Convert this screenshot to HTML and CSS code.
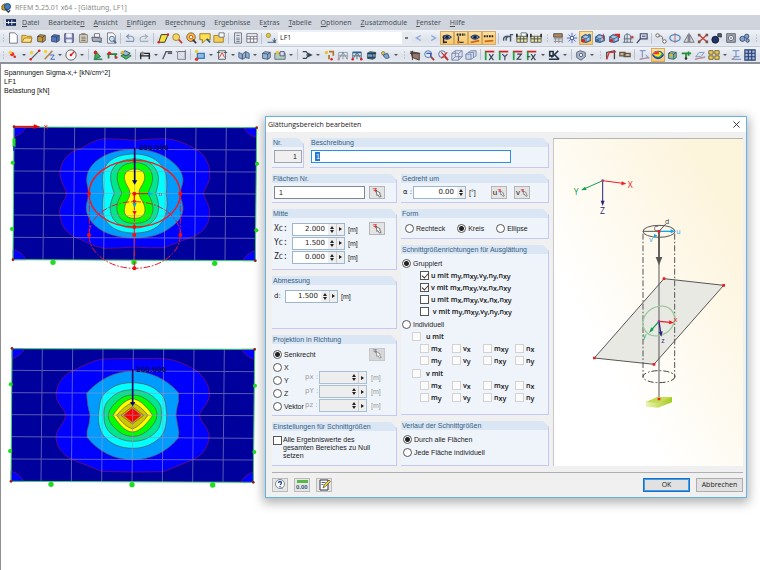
FILE: index.html
```html
<!DOCTYPE html>
<html lang="de">
<head>
<meta charset="utf-8">
<title>RFEM 5.25.01 x64 - [Glättung, LF1]</title>
<link rel="stylesheet" href="styles.css">
</head>
<body>
<header class="titlebar">
  <svg class="app-icon" viewBox="0 0 12 12"><path d="M1 4l3-2 3 2v4L4 9 1 8z" fill="#e0a526" stroke="#6b4d12"/><circle cx="7" cy="5" r="3.4" fill="#3c7cba" stroke="#1d3f6c"/><path d="M5 8l3 3 2-2" fill="none" stroke="#243d5c" stroke-width="1.5"/></svg>
  <span>RFEM 5.25.01 x64 - [Glättung, LF1]</span>
</header>
<nav class="menubar">
  <i class="grip"></i>
  <svg class="menu-icon" viewBox="0 0 12 10"><rect y="1" width="12" height="8" fill="#17295c"/><path d="M0 5h12M3 3v4M7 2v6M9.500 4v2" stroke="#fff"/></svg>
  <a href="#"><u>D</u>atei</a><a href="#">Bearbeite<u>n</u></a><a href="#"><u>A</u>nsicht</a><a href="#"><u>E</u>infügen</a><a href="#">Be<u>r</u>echnung</a><a href="#">Er<u>g</u>ebnisse</a><a href="#">E<u>x</u>tras</a><a href="#"><u>T</u>abelle</a><a href="#"><u>O</u>ptionen</a><a href="#"><u>Z</u>usatzmodule</a><a href="#"><u>F</u>enster</a><a href="#"><u>H</u>ilfe</a>
</nav>
<div class="toolbar" id="bar-main"></div>
<div class="toolbar last" id="bar-model"></div>

<main class="workspace">
  <p class="legend">Spannungen Sigma-x,+ [kN/cm^2]<br>LF1<br>Belastung [kN]</p>
  <svg class="plot" viewBox="0 24 795 480">
    <path d="M42 51L770 53 766 452 39 449z" fill="#00009c"/>
    <g fill="#0000ff" stroke="#8a1060" stroke-width="2">
      <path d="M42 51H79Q68 72 42 81zM770 53H732Q744 76 769 82zM39 449H78Q66 426 39 418zM766 452H728Q740 430 766 421z"/>
      <path d="M312 86Q360 86 403 91Q450 86 492 86C530 87 560 103 587 117C617 134 632 168 629 200C627 225 611 235 611 251C613 270 630 280 629 315C626 352 600 374 570 383L492 413Q450 415 403 411Q360 415 312 415C275 408 255 392 222 381C190 362 180 335 179 305C181 277 199 269 199 251C197 230 178 218 180 182C184 151 208 124 240 117C266 102 285 89 312 86z"/>
    </g>
    <g stroke="#704a48" stroke-width="2">
      <path fill="#009bff" d="M403 118C450 118 490 132 515 154C545 177 554 203 547 224Q536 251 547 279C554 306 544 330 515 350C485 374 450 384 403 384C353 384 314 371 289 350C260 326 253 296 262 272Q269 251 262 228C254 194 268 166 298 146C325 128 360 118 403 118z"/>
      <path fill="#00ffff" d="M403 132C437 132 464 144 479 160C500 182 503 210 499 250C504 290 502 320 478 345C457 363 433 369 403 369C367 369 339 359 322 338C303 313 306 278 311 250C306 208 304 179 326 156C344 139 373 132 403 132z"/>
      <path fill="#00e68c" d="M404 147C438 147 461 162 470 183C480 205 474 224 467 250C479 282 480 308 463 329C447 348 426 354 404 354C373 354 352 345 338 324C324 299 333 272 343 250C330 216 327 192 341 172C355 154 378 147 404 147z"/>
      <path fill="#00ff00" d="M404 158C431 158 448 169 455 189C463 215 450 231 444 250C456 274 464 292 455 315C447 335 425 340 404 340C375 340 360 330 353 309C345 287 357 267 366 250C356 229 346 204 355 184C363 166 382 158 404 158z"/>
      <path fill="#ffff00" d="M404 177C425 177 436 188 434 205C431 225 416 234 417 250C418 266 435 278 435 299C435 318 421 325 404 325C383 325 372 317 373 298C374 278 389 267 390 250C390 234 374 222 373 204C373 187 385 177 404 177z"/>
    </g>
    <path d="M133 52L129 450M224 52L220 450M315 52L311 450M406 52L402 451M497 52L493 451M588 53L584 451M679 53L675 452M42 116L769 120M41 183L769 186M41 249L768 252M40 315L768 320M40 382L767 385" stroke="#9696c4" stroke-width="3" opacity=".6"/>
    <path d="M42 51L770 53 766 452 39 449z" fill="none" stroke="#3ccf70" stroke-width="3"/>
    <g fill="#20dc20"><circle cx="159" cy="457" r="8"/><circle cx="402" cy="457" r="8"/><circle cx="644" cy="460" r="8"/><circle cx="38" cy="158" r="6"/><circle cx="771" cy="161" r="6"/><circle cx="36" cy="357" r="6"/><circle cx="769" cy="361" r="6"/></g>
    <path d="M42 85v26" stroke="#20dc20" stroke-width="9"/><path d="M42 109v14" stroke="#1430d0" stroke-width="5"/>
    <path d="M42 50H102" stroke="#f01010" stroke-width="5"/><path d="M101 43l20 7-20 7z" fill="#e00"/><path d="M133 45l9 11m0-11l-9 11" stroke="#e33" stroke-width="3"/>
    <g fill="none" stroke="#ff1414" stroke-width="4"><ellipse cx="404" cy="251" rx="137" ry="100"/><path d="M403 251V280M404 251H445"/></g>
    <g fill="none" stroke="#e81830" stroke-width="3" stroke-dasharray="20 5 5 5"><ellipse cx="404" cy="375" rx="137" ry="100"/><path d="M268 251V375M541 251V375M403 280V475"/></g>
    <g fill="#f01010"><circle cx="403" cy="151" r="6"/><circle cx="267" cy="251" r="6"/><circle cx="541" cy="251" r="6"/><circle cx="403" cy="251" r="6"/><circle cx="403" cy="274" r="5"/><circle cx="403" cy="351" r="6"/><circle cx="267" cy="375" r="6"/><circle cx="403" cy="375" r="6"/><circle cx="541" cy="375" r="6"/><circle cx="403" cy="475" r="6"/><path d="M397 303h13l-6 13z"/></g>
    <path d="M444 245v13l15-7zM397 279h13l-6 15z" fill="#00a8e8"/><text x="477" y="258" font-size="18" fill="#e23">u</text>
    <path d="M404 113V214" stroke="#080870" stroke-width="5"/><path d="M396 211h16l-8 13z" fill="#080870"/><text class="load" x="416" y="121">200.000</text>
    <g fill="#9a1818"><circle cx="42" cy="50" r="4"/><circle cx="770" cy="53" r="4"/><circle cx="766" cy="452" r="4"/><circle cx="39" cy="449" r="4"/></g>
  </svg>
  <svg class="plot" viewBox="0 24 795 471">
    <path d="M36 41L764 43 760 442 33 439z" fill="#00009c"/>
    <g fill="#0000ff" stroke="#8a1060" stroke-width="2">
      <path d="M36 41H74Q62 63 36 71zM764 43H725Q739 67 763 73zM33 439H71Q59 417 33 408zM760 442H722Q734 420 760 411z"/>
      <path d="M306 72Q398 69 489 71C530 73 560 91 588 106C620 133 630 159 628 184C620 217 600 224 599 241C600 262 625 274 628 306C623 338 607 362 575 376L490 410Q398 413 306 409L215 373C184 356 168 331 168 304C171 276 196 265 196 241C195 218 169 211 168 177C171 148 188 119 219 107C253 90 276 78 306 72z"/>
    </g>
    <g stroke="#704a48" stroke-width="2">
      <path fill="#009bff" d="M397 108C447 109 500 130 536 174V198Q530 220 528 241Q533 270 537 292L535 309C498 354 450 374 397 375C342 373 297 352 261 307V289Q269 265 270 241Q260 206 260 174C296 134 343 109 397 108z"/>
      <path fill="#00ffff" d="M397 143C430 144 455 151 475 170C500 188 496 210 500 235C500 263 497 291 479 309C457 329 429 340 397 340C363 339 337 329 317 309C298 291 295 264 295 241C300 210 297 187 321 169C342 150 367 143 397 143z"/>
      <path fill="#00e68c" d="M397 164C425 165 449 174 466 191C486 209 484 222 484 241C484 263 479 283 462 296C444 312 423 319 397 319C369 318 348 308 331 294C315 278 312 262 312 241C310 219 317 201 334 188C350 172 370 165 397 164z"/>
      <path fill="#00ff00" d="M397 180C421 180 438 191 452 204C466 216 471 228 471 241C469 258 460 269 448 282C433 296 417 304 397 304C376 303 360 295 346 280C333 268 325 257 325 241C326 227 335 215 347 203C361 190 375 180 397 180z"/>
      <path fill="#ffff00" d="M397 191C416 193 437 209 458 241C437 272 416 291 397 291C377 290 359 271 339 241C358 211 379 193 397 191z"/>
      <path fill="#c9c800" d="M397 203Q420 211 444 241Q420 274 397 282Q373 274 350 241Q373 212 397 203z"/>
      <path fill="#ffa000" d="M397 215L431 241 397 267 363 241z"/>
      <path fill="#ff0000" d="M397 220L423 241 397 262 371 241z"/>
    </g>
    <path d="M127 42L123 440M218 42L214 440M309 42L305 440M400 42L396 441M491 42L487 441M582 43L578 441M673 43L669 442M36 106L763 110M35 173L763 176M35 239L762 242M34 305L762 310M34 372L761 375" stroke="#9696c4" stroke-width="3" opacity=".6"/>
    <path d="M36 41L764 43 760 442 33 439z" fill="none" stroke="#3ccf70" stroke-width="3"/>
    <g fill="#20dc20"><circle cx="153" cy="448" r="8"/><circle cx="396" cy="449" r="8"/><circle cx="638" cy="450" r="8"/><circle cx="32" cy="148" r="6"/><circle cx="765" cy="152" r="6"/><circle cx="30" cy="348" r="6"/><circle cx="763" cy="351" r="6"/></g>
    <path d="M398 102V203" stroke="#080870" stroke-width="5"/><path d="M390 201h16l-8 13z" fill="#080870"/><text class="load" x="408" y="111">200.000</text>
    <g fill="#9a1818"><circle cx="36" cy="40" r="4"/><circle cx="764" cy="43" r="4"/><circle cx="760" cy="442" r="4"/><circle cx="33" cy="439" r="4"/></g>
  </svg>
</main>

<section class="dialog" role="dialog" aria-labelledby="dlg-title">
  <header class="dlg-head"><h1 id="dlg-title">Glättungsbereich bearbeiten</h1><button class="close" aria-label="Schließen"><svg viewBox="0 0 8 8"><path d="M.5.5l7 7m0-7l-7 7" stroke="#222" fill="none"/></svg></button></header>
  <form class="dlg-body">
    <div class="settings">
      <div class="name-row">
        <section class="group"><h2><label for="nr">Nr.</label></h2><div class="inner"><input id="nr" class="text ro" value="1" readonly></div></section>
        <section class="group"><h2><label for="desc">Beschreibung</label></h2><div class="inner"><div class="edit"><input id="desc" class="text" value="1"></div></div></section>
      </div>
      <div class="col">
        <section class="group"><h2><label for="areas">Flächen Nr.</label></h2><div class="inner line"><input id="areas" class="text wide" value="1"><button type="button" class="pick end" aria-label="Flächen wählen"><svg viewBox="0 0 12 12"><use href="#pick"/></svg></button></div></section>
        <section class="group center"><h2>Mitte</h2><div class="inner line top">
          <div class="rows">
            <div class="row"><label for="xc">X<small>C</small>:</label><span class="num"><input id="xc" value="2.000"><button type="button" class="spin" aria-label="Ändern"></button><button type="button" class="more" aria-label="Mehr"></button></span><span>[m]</span></div>
            <div class="row"><label for="yc">Y<small>C</small>:</label><span class="num"><input id="yc" value="1.500"><button type="button" class="spin" aria-label="Ändern"></button><button type="button" class="more" aria-label="Mehr"></button></span><span>[m]</span></div>
            <div class="row"><label for="zc">Z<small>C</small>:</label><span class="num"><input id="zc" value="0.000"><button type="button" class="spin" aria-label="Ändern"></button><button type="button" class="more" aria-label="Mehr"></button></span><span>[m]</span></div>
          </div>
          <button type="button" class="pick end" aria-label="Mitte wählen"><svg viewBox="0 0 12 12"><use href="#pick"/></svg></button></div></section>
        <section class="group size"><h2>Abmessung</h2><div class="inner"><div class="row short"><label for="dia">d:</label><span class="num"><input id="dia" value="1.500"><button type="button" class="spin" aria-label="Ändern"></button><button type="button" class="more" aria-label="Mehr"></button></span><span>[m]</span></div></div></section>
        <section class="group proj"><h2>Projektion in Richtung</h2><div class="inner proj-grid">
          <div class="radios"><label><input type="radio" name="proj" checked>Senkrecht</label><label><input type="radio" name="proj">X</label><label><input type="radio" name="proj">Y</label><label><input type="radio" name="proj">Z</label><label><input type="radio" name="proj">Vektor</label></div>
          <div class="vector">
            <button type="button" class="pick off" aria-label="Richtung wählen" disabled><svg viewBox="0 0 12 12"><use href="#pick"/></svg></button>
            <div class="row"><label for="px">px :</label><span class="num"><input id="px" disabled><button type="button" class="spin" aria-label="Ändern"></button><button type="button" class="more" aria-label="Mehr"></button></span><span>[m]</span></div>
            <div class="row"><label for="py">pY :</label><span class="num"><input id="py" disabled><button type="button" class="spin" aria-label="Ändern"></button><button type="button" class="more" aria-label="Mehr"></button></span><span>[m]</span></div>
            <div class="row"><label for="pz">pz :</label><span class="num"><input id="pz" disabled><button type="button" class="spin" aria-label="Ändern"></button><button type="button" class="more" aria-label="Mehr"></button></span><span>[m]</span></div>
          </div></div></section>
        <section class="group"><h2>Einstellungen für Schnittgrößen</h2><div class="inner"><label class="multi"><input type="checkbox">Alle Ergebniswerte des<br>gesamten Bereiches zu Null<br>setzen</label></div></section>
      </div>
      <div class="col">
        <section class="group"><h2>Gedreht um</h2><div class="inner line"><div class="row angle"><label for="alpha">α :</label><span class="num"><input id="alpha" value="0.00"><button type="button" class="spin" aria-label="Ändern"></button></span><span>[°]</span></div><button type="button" class="pick">u<svg viewBox="0 0 12 12"><use href="#pick"/></svg></button><button type="button" class="pick">v<svg viewBox="0 0 12 12"><use href="#pick"/></svg></button></div></section>
        <section class="group shape"><h2>Form</h2><div class="inner form-row"><label><input type="radio" name="shape">Rechteck</label><label><input type="radio" name="shape" checked>Kreis</label><label><input type="radio" name="shape">Ellipse</label></div></section>
        <section class="group forces"><h2>Schnittgrößenrichtungen für Ausglättung</h2><div class="inner">
          <label><input type="radio" name="mode" checked>Gruppiert</label>
          <div class="sub">
            <label><input type="checkbox" checked><b>u mit m<i>y</i>,m<i>xy</i>,v<i>y</i>,n<i>y</i>,n<i>xy</i></b></label>
            <label><input type="checkbox" checked><b>v mit m<i>x</i>,m<i>xy</i>,v<i>x</i>,n<i>x</i>,n<i>xy</i></b></label>
            <label><input type="checkbox"><b>u mit m<i>x</i>,m<i>xy</i>,v<i>x</i>,n<i>x</i>,n<i>xy</i></b></label>
            <label><input type="checkbox"><b>&nbsp;v mit m<i>y</i>,m<i>xy</i>,v<i>y</i>,n<i>y</i>,n<i>xy</i></b></label>
          </div>
          <label class="step"><input type="radio" name="mode">Individuell</label>
          <div class="indent"><label><input type="checkbox" disabled><b>u mit</b></label></div>
          <div class="sub quad"><label><input type="checkbox" disabled><b>m<i>x</i></b></label><label><input type="checkbox" disabled><b>v<i>x</i></b></label><label><input type="checkbox" disabled><b>m<i>xy</i></b></label><label><input type="checkbox" disabled><b>n<i>x</i></b></label><label><input type="checkbox" disabled><b>m<i>y</i></b></label><label><input type="checkbox" disabled><b>v<i>y</i></b></label><label><input type="checkbox" disabled><b>n<i>xy</i></b></label><label><input type="checkbox" disabled><b>n<i>y</i></b></label></div>
          <div class="indent step"><label><input type="checkbox" disabled><b>v mit</b></label></div>
          <div class="sub quad"><label><input type="checkbox" disabled><b>m<i>x</i></b></label><label><input type="checkbox" disabled><b>v<i>x</i></b></label><label><input type="checkbox" disabled><b>m<i>xy</i></b></label><label><input type="checkbox" disabled><b>n<i>x</i></b></label><label><input type="checkbox" disabled><b>m<i>y</i></b></label><label><input type="checkbox" disabled><b>v<i>y</i></b></label><label><input type="checkbox" disabled><b>n<i>xy</i></b></label><label><input type="checkbox" disabled><b>n<i>y</i></b></label></div>
        </div></section>
        <section class="group"><h2>Verlauf der Schnittgrößen</h2><div class="inner course"><label><input type="radio" name="course" checked>Durch alle Flächen</label><label><input type="radio" name="course">Jede Fläche individuell</label></div></section>
      </div>
    </div>
    <div class="preview">
      <svg viewBox="5 78 567 980">
        <path d="M335 497L514 517 305 754 126 735z" fill="#e9e9e4" stroke="#555" stroke-width="3"/>
        <ellipse cx="320" cy="355" rx="48" ry="18" fill="none" stroke="#555" stroke-width="3"/>
        <path d="M272 355H320L340 333M320 355V858" stroke="#555" stroke-width="3" fill="none"/>
        <path d="M320 355V440" stroke="#555" stroke-width="5"/><path d="M310 432h20l-10 25z" fill="#555"/>
        <path d="M272 362V794M367 362V794" stroke="#555" stroke-width="3" stroke-dasharray="18 6 5 6" fill="none"/>
        <ellipse cx="320" cy="791" rx="48" ry="18" fill="none" stroke="#444" stroke-width="3" stroke-dasharray="18 6 5 6"/>
        <ellipse cx="319" cy="624" rx="50" ry="42" transform="rotate(-35 319 624)" fill="none" stroke="#9cc89c" stroke-width="4"/>
        <path d="M320 355H357" stroke="#12a6e8" stroke-width="4"/><path d="M355 349l13 6-13 6zM304 374l2-12 9 6z" fill="#12a6e8"/>
        <path d="M151 203L212 211" stroke="#ee1c24" stroke-width="3"/><path d="M208 205l14 7-15 5z" fill="#ee1c24"/>
        <path d="M151 203L95 228" stroke="#10a050" stroke-width="3"/><path d="M98 221l5 10-17 1z" fill="#10a050"/>
        <path d="M151 203V266" stroke="#2b2282" stroke-width="3"/><path d="M145 263h12l-6 16z" fill="#2b2282"/>
        <path d="M320 625L354 628" stroke="#ee1c24" stroke-width="4"/><path d="M351 622l14 7-15 5z" fill="#ee1c24"/>
        <path d="M320 625L298 650" stroke="#10a050" stroke-width="4"/><path d="M297 643l7 8-14 9z" fill="#10a050"/>
        <path d="M320 625L325 659" stroke="#2b2282" stroke-width="4"/><path d="M319 657l12-2-4 16z" fill="#2b2282"/>
        <defs><linearGradient id="base"><stop offset="0" stop-color="#edf3b4"/><stop offset="1" stop-color="#a4cb1d"/></linearGradient></defs>
        <path d="M281 867L315 852H359V868L317 884 281 881z" fill="url(#base)"/><path d="M281 867L315 852H359L317 869z" fill="#c3dc52"/>
        <g fill="#ee1c24"><path d="M331 493h8v8h-8zM510 513h8v8h-8zM301 750h8v8h-8zM122 731h8v8h-8zM316 351h8v8h-8zM316 854h8v8h-8z"/></g>
        <circle cx="151" cy="203" r="4" fill="#a04080"/><circle cx="320" cy="625" r="4" fill="#a04080"/>
        <g class="axis"><text x="226" y="224" fill="#ee1c24">X</text><text x="64" y="246" fill="#10a050">Y</text><text x="143" y="304" fill="#2b2282">Z</text></g>
        <g class="axis small"><text x="338" y="334" fill="#444">d</text><text x="304" y="354" fill="#444">C</text><text x="372" y="363" fill="#12a6e8">u</text><text x="291" y="388" fill="#12a6e8">v</text><text x="364" y="627" fill="#ee1c24">x</text><text x="271" y="675" fill="#10a050">y</text><text x="327" y="691" fill="#2b2282">z</text></g>
      </svg>
    </div>
  </form>
  <footer class="dlg-foot">
    <button class="tool" aria-label="Hilfe"><svg viewBox="0 0 13 12"><circle cx="6" cy="5" r="4.500" fill="#fff" stroke="#78849c"/><path d="M4.500 4q0-1.500 1.500-1.500T7.500 4Q7.500 5 6 5.800M6 7v1.200" fill="none" stroke="#24489a" stroke-width="1.300"/><path d="M6 9l3 1-1-2" fill="#9098a8"/></svg></button>
    <button class="tool" aria-label="Einheiten"><svg viewBox="0 0 13 12"><path d="M1 1h11v3H1z" fill="#58b848"/><text class="unit" x="0" y="10">0.00</text></svg></button>
    <button class="tool" aria-label="Kommentar"><svg viewBox="0 0 13 12"><path d="M2 1h8v10H2z" fill="#fff" stroke="#334"/><path d="M3.500 3.500h4M3.500 5.500h2" stroke="#567"/><path d="M5 9l1-3 5-5 1.500 1.500-5 5z" fill="#f4cf38" stroke="#333" stroke-width=".6"/></svg></button>
    <button class="push default">OK</button><button class="push">Abbrechen</button>
  </footer>
</section>
<svg class="defs" aria-hidden="true"><symbol id="pick" viewBox="0 0 12 12"><path d="M1 1h5M2 3h4M4 0v5" stroke="#d43a3a"/><path d="M5 3l1 6 1-1 2 3 2-1-2-3 1-1z" fill="#fff" stroke="#333" stroke-width=".8"/></symbol></svg>
<script src="toolbars.js"></script>
</body>
</html>
```
FILE: styles.css
```css
* { box-sizing: border-box; }
body { margin: 0; min-height: 100vh; display: flex; flex-direction: column; position: relative; overflow: hidden; background: #fff; color: #1a1a1a; font: 7px/9px "Liberation Sans", sans-serif; }
button, input { font: inherit; color: inherit; margin: 0; padding: 0; }
button { display: flex; align-items: center; justify-content: center; border: 0; background: none; }
svg { display: block; flex: none; }
.defs { position: absolute; width: 0; height: 0; }

.titlebar { display: flex; align-items: center; gap: 3px; height: 15px; padding-left: 1px; color: #8a8a8a; font: 7px/15px "Noto Sans", sans-serif; }
.app-icon { width: 11px; height: 11px; }
.menubar { display: flex; align-items: center; gap: 9px; height: 15px; background: #cfd4dd; font: 7px/15px "Noto Sans", sans-serif; }
.menubar a { color: #4c5158; text-decoration: none; }
.menubar .grip { width: 6px; margin-right: -9px; }
.menubar u { text-underline-offset: 1px; }
.menu-icon { width: 10px; height: 9px; margin-right: -3px; }
.toolbar { display: flex; align-items: center; height: 17px; overflow: hidden; background: linear-gradient(#f0f3f8, #dde2eb 60%, #e6eaf1); border-bottom: 1px solid #c6ccd7; }
.toolbar.last { border-bottom: 2px solid #8d9299; }
.toolbar button { flex: none; width: 14px; height: 14px; }
.toolbar button svg { width: 12px; height: 12px; }
.toolbar .on { background: linear-gradient(#fde2a2, #fbc464); outline: 1px solid #d3ab67; outline-offset: -1px; }
.toolbar .dd { width: 8px; }
.toolbar .dd::after { content: ""; border: 2px solid transparent; border-top-color: #555; border-bottom: 0; }
.sep { flex: none; width: 5px; height: 11px; background: linear-gradient(#bcc3cf, #bcc3cf) center/1px 100% no-repeat; }
.grip { flex: none; width: 6px; height: 10px; background: radial-gradient(circle, #a0a8b5 1px, transparent 1px) center/3px 3px repeat-y; }
.grip.wide { width: 8px; }
.toolbar select { width: 138px; height: 12px; padding: 0 2px; border: 0; border-radius: 0; appearance: none; color: #222; font: 7px/12px "Open Sans", sans-serif; background: linear-gradient(#777, #777) right 4px center/3px 2px no-repeat, linear-gradient(#e5e9f0, #e5e9f0) right/10px 100% no-repeat, #fff; }

.workspace { flex: 1; display: flex; flex-direction: column; align-items: flex-start; border-left: 1px solid #8f8f8f; }
.legend { margin: 0 0 23px; padding: 4px 3px 0; color: #111; }
.plot { width: 265px; margin-left: -1px; margin-bottom: 65px; }
.load { font: 700 20px "DejaVu Sans", sans-serif; fill: #08085c; }

.dialog { position: absolute; left: 265px; right: 13px; top: 116px; background: #f0f0f0; border: 1px solid #62b4e6; box-shadow: 0 3px 10px 2px rgba(0, 0, 0, .3); }
.dlg-head { display: flex; justify-content: space-between; align-items: center; height: 15px; padding: 0 6px 0 2px; background: #fff; }
.dlg-head h1 { margin: 0; color: #222; font: 7px/15px "Open Sans", sans-serif; }
.close svg { width: 7px; height: 7px; }
.dlg-body { display: flex; gap: 4px; padding: 6px 3px 6px 6px; }
.settings { display: grid; grid-template-columns: 125px 148px; gap: 6px 4px; }
.name-row { grid-column: 1 / -1; display: grid; grid-template-columns: 32px 1fr; gap: 6px; }
.col { display: flex; flex-direction: column; gap: 6px; }
.group { display: flex; flex-direction: column; background: #eff4fb; border-right: 1px solid #c5c8f2; border-bottom: 1px solid #c5c8f2; position: relative; }
.group::after { content: ""; position: absolute; top: 0; right: -1px; border: 3px solid #f0f0f0; border-left-color: transparent; border-bottom-color: transparent; }
.group h2 { margin: 0; padding-left: 1px; background: #dbe6f5; color: #33607f; font: 7px/9px "Liberation Sans", sans-serif; }
.inner { padding: 3px 2px; }
.line { display: flex; align-items: center; }
.line.top { align-items: flex-start; }
.end { margin-left: auto; }
.center { min-height: 61px; }
.size { flex: 1; min-height: 51px; }
.text { display: block; height: 13px; border: 1px solid #83878c; background: #fff; padding: 0 4px; width: 100%; }
.text.ro { background: #f0f0f0; text-align: right; width: 28px; border-color: #a0a4a8; }
.text.wide { width: 91px; }
.edit { width: 200px; margin-left: -1px; }
.edit .text { border: 1px solid #2c90e0; background: linear-gradient(#2478d0, #2478d0) 3px center/5px 9px no-repeat, #fff; color: #fff; }
.pick { width: 16px; height: 13px; border: 1px solid #b5b5b5; background: #e4e4e4; }
.end.pick { margin-right: 9px; }
.pick svg { width: 10px; height: 10px; }
.pick.off { background: #ccc; filter: grayscale(1); opacity: .7; }
.angle + .pick { margin-left: auto; }
.angle ~ .pick { margin-right: 7px; font-size: 8px; }
.angle ~ .pick:last-child { margin-right: 16px; }
.angle ~ .pick svg { width: 8px; }
.row { display: flex; align-items: center; gap: 3px; height: 14px; }
.row > label { white-space: nowrap; }
.center .row > label { font: 8px/9px "DejaVu Sans Mono", monospace; width: 15px; }
.center small { font-size: 7px; }
.row.short > label { width: 8px; font: 7px/9px "DejaVu Sans", sans-serif; }
.row.angle > label { width: 7px; font: 7px/9px "DejaVu Sans", sans-serif; }
.row.angle { height: 13px; }
.center .inner, .size .inner { padding-top: 4px; }
.num { display: flex; width: 53px; height: 13px; border: 1px solid #9cb6cd; background: #fff; }
.num input { flex: 1; min-width: 0; border: 0; background: none; text-align: right; padding-right: 3px; font: 7px/9px "DejaVu Sans", sans-serif; }
.spin, .more { flex: none; width: 8px; background: #eee; }
.spin { flex-direction: column; gap: 1px; }
.spin::before, .spin::after { content: ""; border: 2px solid transparent; border-bottom: 3px solid #222; border-top: 0; }
.spin::after { border-bottom: 0; border-top: 3px solid #222; }
.more { border-left: 1px solid #ccc; }
.more::before { content: ""; border: 2px solid transparent; border-left: 3px solid #222; border-right: 0; }
label:has(> input) { display: flex; align-items: center; gap: 2px; height: 12px; white-space: nowrap; }
input[type=radio] { appearance: none; flex: none; width: 9px; height: 9px; border: 1px solid #555; border-radius: 50%; background: #fff; }
input[type=radio]:checked { background: radial-gradient(circle, #222 2px, #fff 3px); }
input[type=checkbox] { appearance: none; flex: none; width: 9px; height: 9px; border: 1px solid #555; background: #fff; position: relative; }
input[type=checkbox]:disabled { border-color: #d2d2d2; background: #fbfbfb; }
input[type=checkbox]:checked::after { content: ""; position: absolute; left: 2px; top: 0; width: 3px; height: 5px; border: solid #333; border-width: 0 1px 1px 0; transform: rotate(42deg); }
.proj-grid { display: flex; padding: 4px 0 2px 1px; }
.radios { flex: 1; min-width: 0; }
.radios label:has(> input) { height: 13px; }
.vector { flex: none; width: 91px; color: #9a9a9a; display: flex; flex-direction: column; align-items: flex-start; }
.vector .pick { margin: 0 0 10px 64px; }
.vector .row > label { width: 13px; font: 7px/9px "DejaVu Sans", sans-serif; }
.vector .row { gap: 1px; }
.vector .row > span:last-child { margin-left: 3px; }
.vector .num { width: 48px; background: #eee; border-color: #a9bfd4; }
label.multi:has(> input) { display: block; position: relative; height: auto; padding: 2px 0 2px 9px; line-height: 8px; }
label.multi input { position: absolute; left: -1px; top: 2px; }
.form-row { display: flex; gap: 12px; padding: 4px 4px; }
.forces { flex: 1; }
.forces .inner { padding: 3px 1px; }
.forces b { font: 600 7px/9px "Noto Sans", sans-serif; }
.forces b i { font-style: normal; position: relative; top: 1px; }
.sub { padding-left: 18px; }
.indent { padding-left: 10px; }
.quad { display: grid; grid-template-columns: 32px 31px 32px 1fr; }
.indent b { margin-left: 3px; }
.step { margin-top: 1px; }
.course { display: flex; flex-direction: column; gap: 1px; padding: 4px 2px 6px; }
.preview { flex: 1; display: flex; justify-content: center; min-width: 0; border-top: 1px solid #b4b4b4; border-left: 1px solid #c8c8c8; background: linear-gradient(to top right, #fff 30%, #fdf4dc 85%); }
.preview svg { width: 100%; height: auto; align-self: flex-start; }
.axis { font: 26px "Open Sans", sans-serif; }
.axis.small { font-size: 21px; }
.dlg-foot { display: flex; align-items: center; gap: 6px; margin: 0 3px 0 6px; padding: 5px 0; border-top: 1px solid #b0b0b0; }
.tool { width: 16px; height: 14px; border: 1px solid #bbb; background: #e6e6e6; }
.tool svg { width: 13px; height: 12px; }
.unit { font: 700 6px "Liberation Sans", sans-serif; fill: #357; }
.push { width: 47px; height: 14px; border: 1px solid #adadad; background: #e1e1e1; font-family: "Open Sans", sans-serif; }
.push.default { margin-left: auto; border: 1px solid #0f74cf; outline: 1px solid #4c9add; outline-offset: -2px; }
```
FILE: toolbars.js
```javascript
// Drawing helpers for the 14 x 14 toolbar icons.
const p = (d, s = '#445', f = 'none', w = 1) => `<path d="${d}" stroke="${s}" fill="${f}" stroke-width="${w}"/>`;
const c = (x, y, r, f, s = 'none') => `<circle cx="${x}" cy="${y}" r="${r}" fill="${f}" stroke="${s}"/>`;
const cube = (x, y, f) => p(`M${x} ${y + 3}l3-2 6 1v6l-3 2-6-1z M${x} ${y + 3}l6 1v6 M${x + 6} ${y + 4}l3-2`, '#334', f, .8);
const lens = p('M9 9l4 4', '#a33', 'none', 2) + c(6, 6, 4, '#dcebf8', '#46699a');
const page = p('M3 1h6l3 3v9H3z', '#667', '#fff');
const frame = p('M2 12V4h10v8M2 8h10M7 4v8M2 12L7 4l5 8', '#567');
const folder = p('M1 4h5l1 1h5v7H1z', '#a07a20', '#f4cf58');
const table = p('M1 5h12v7H1z', '#555', '#efe49a') + p('M1 8h12M5 5v7M9 5v7', '#345') + p('M1 2v4M13 2v4', '#333', 'none', 2);
const axis = (l, col) => p('M1 3h11', '#d02020', 'none', 2) + p('M2 13V3', '#20a040', 'none', 2) + p(l, col, 'none', 1.3);
const X = 'M6 6l5 7m0-7l-5 7', Y = 'M5 6l3 3 3-3M8 9v4', Z = 'M6 6h5l-5 6h5';
const eye = p('M2 6q5-5 10 0q-5 5-10 0', '#223c70', '#7aa3dc', 1.2) + c(7, 6, 2, '#123');
const mini = (col, k = '#35608e') => p('M2 11V6l4-3 6 2v5l-5 2z', k, '#a8c6e4', 1.4) + p('M2 6l5 2v4M7 8l5-3', k) + c(4, 10, 2, col);

const main = [
  'grip', ['Neu', page], ['Öffnen', folder + p('M1 12l3-5h9l-2 5z', '#a07a20', '#ffe28a')], ['Projekt', cube(3, 2, '#c79a3a')], ['Block', cube(3, 2, '#4a78c4')],
  ['Speichern', p('M2 2h10v10H2z', '#446', '#7b86b8') + p('M4 2h6v4H4zM4 9h6v3H4z', '#dde', '#f4f6ff')],
  ['Kopieren', p('M3 3h9v9H3z', '#776', '#d9d3c4') + p('M5 6h5M5 8h5M5 10h5M5 2h5', '#765')], ['Drucken', p('M4 2h6v4H4z', '#667', '#fff') + p('M1 6l11 1v4H2z', '#556', '#a9b1bd') + p('M9 12h4', '#38a')],
  ['Vorschau', page + c(8, 8, 3, '#cfe1f4', '#468') + p('M10 10l3 3', '#468', 'none', 2)], 'sep',
  ['Rückgängig', p('M2 11h9q2-5-3-6H3m3-2L3 5l3 3', '#8195b4', 'none', 1.3)], ['Wiederholen', p('M12 11H3q-2-5 3-6h5M8 3l3 2-3 3', '#a3adbb', 'none', 1.3)], 'sep',
  ['Fläche', p('M2 12l3-9h8l-4 9z', '#222', '#f6e33d') + c(2, 12, 1.5, '#d22') + c(13, 3, 1.5, '#d22')], ['Finden', c(6, 6, 4, '#f3d760', '#977a30') + p('M9 9l4 4', '#c33', 'none', 2)],
  ['Filter', c(7, 6, 5, '#edc734', '#755') + c(7, 6, 2, '#fff', '#d33') + p('M9 9l4 4', '#333', 'none', 2)], ['Notiz', p('M1 2h12v7H8l-4 4V9H1z', '#976d1c', '#ffe14d') + p('M9 8l4 4', '#357', 'none', 2)],
  ['Ordner', folder + p('M7 1h6v5H7z', '#667', '#fff')], 'sep', ['Rechner', p('M3 1h8v12H3z', '#667', '#e8edf4') + p('M5 4h4M5 7h4M5 9h4M5 11h4', '#567')], ['Tabelle', p('M1 2h12v10H1zM1 5h12M5 5v7M9 5v7M1 8h12', '#667', '#fff')], 'sep',
  ['Lastfall', c(4, 4, 2.500, '#e8cb27', '#985') + p('M3 12h10M11 12V7M9 9l2 3 2-3', '#356')], 'select',
  ['Zurück', p('M9 4L4 7l5 3', '#87a5da', 'none', 1.500)], ['Vor', p('M5 4l5 3-5 3', '#87a5da', 'none', 1.500)],
  ['Ergebnisse', eye + p('M3 4v9M3 12h4', '#223', 'none', 1.600), 'on'], ['Werte', p('M2 3h10', '#222', 'none', 2.500).replace('/>', ' stroke-dasharray="2 1"/>') + p('M4 5v7h6', '#345', 'none', 1.500) + c(4, 12, 1.500, '#c62'), 'on'], ['Ansicht', eye + p('M2 12l10-2', '#c62', 'none', 2), 'on'], ['Zahlen', p('M1 5h12', '#222', 'none', 2.500).replace('/>', ' stroke-dasharray="2 1"/>') + p('M2 11l10-1', '#c62', 'none', 2), 'on'], 'sep',
  ['Bezeichnung', p('M2 10q-1-5 5-5M5 10q-1-5 5-5M10 11V3h3', '#456', 'none', 1.600)], ['Tabelle 1', table + p('M6 1h6v4H6z', '#567', '#fff')], ['Tabelle 2', table], 'gripw',
  ['Raster', p('M2 2h10v4H2z', '#444', '#b48b56') + p('M2 8h10M2 11h10M4 6v7M8 6v7M12 6v7', '#888')], ['Fang', p('M1 7h12M7 1v12M3 3l8 8M3 11l8-8', '#4659b4') + c(7, 7, 2, '#fff', '#35a')],
  ['Arbeitsebene', mini('#d22') + c(11, 4, 2, '#37b'), 'on'], ['Ebene XY', mini('#468') + p('M11 2v7', '#d22')], ['Ebene YZ', mini('#d22') + p('M8 3h5v4', '#d22', 'none', 2)], ['Linien', p('M3 12V4l3-2 4 2v8M1 12h12M2 8h10M6 2v10', '#567') + c(12, 6, 1.500, '#c44')],
  ['Fenster', p('M5 2h8v6H5zM7 5h4', '#446', '#cedcf0', 1.300) + p('M5 8l-4 5', '#446', 'none', 1.500)], 'sep',
  ['Verschieben', c(3, 4, 2, '#fff', '#555') + c(11, 11, 2, '#fff', '#555') + p('M4 5q5-2 5 4', '#555')], ['Drehen', p('M7 1v12', '#c55') + '<ellipse cx="7" cy="7" rx="6" ry="4" fill="none" stroke="#5585bb" stroke-width="1.5"/>'], ['Spiegeln', p('M6 3v9H1zM8 3v9h5zM7 1v12', '#667', '#d7d7d7')],
  ['Löschen', p('M2 3l10 9M12 3L2 12', '#c34339', 'none', 1.600) + p('M1 2h3v3H1zM10 2h3v3h-3zM1 10h3v3H1zM10 10h3v3h-3z', 'none', '#754')], ['Volumen', c(5, 9, 4, '#22346c', '#112') + p('M8 5V2h4v4z', '#223', '#567')], ['Aussparung', p('M2 2h10v10H2z', '#555', '#aab') + c(7, 7, 3, '#fff', '#456') + c(7, 7, 1, '#345')], ['Gruppe', c(4, 8, 3, '#7fa4d0', '#346') + c(9, 5, 2.500, '#7fa4d0', '#346') + c(10, 10, 2, '#7fa4d0', '#346')], 'gripw'
];
const red = c(4, 4, 2, '#d32222');
const model = [
  'grip', ['Knoten', c(6, 6, 2.500, '#e33') + c(4, 4, 2, '#f2cf32') + c(9, 9, 1.500, '#d22')], 'dd', ['Linie', p('M2 12L12 2', '#555', 'none', 1.300) + c(3, 4, 2, '#f2cf32') + c(12, 2, 1.500, '#d22') + c(2, 12, 1.500, '#d22')], ['Stab', p('M2 12L11 2', '#b68a44', 'none', 2) + p('M8 7h5l-4 5h5', '#35c') + c(3, 3, 2, '#f2cf32')], 'dd', ['Zeit', c(7, 7, 6, '#f6f6f6', '#555') + p('M7 7l4-4', '#d22', 'none', 1.500) + c(7, 7, 1.500, '#d22')], 'dd', 'sep',
  ['Auflager', p('M4 2l6 7-7 3z', '#276d35', '#45a858') + p('M2 12h10', '#386', 'none', 2) + red], ['Linienlager', p('M1 6h12M3 7v4M11 7v4', '#2a8040', 'none', 2) + c(4, 5, 2, '#d22') + c(12, 10, 1.500, '#d22')], ['Flächenlager', p('M1 8l6-3 6 3-6 4z', '#26783a', '#4cab68') + p('M1 5l5-3 6 3-5 3z', '#346', '#8fc1d4') + c(3, 4, 2, '#ddb531')], 'sep',
  ['Bemaßung', p('M2 12V5h10v7M1 8h12', '#222', 'none', 1.500) + c(4, 5, 2, '#888')], 'dd', ['Messen', p('M2 12L6 3M5 3h8M8 5h5', '#556', 'none', 1.600)], ['Rahmen', p('M3 3h9v9H3zM1 3h12M12 1v12', '#778') + p('M3 3l9 9', '#ccc')], 'sep',
  ['Knotenlast', p('M4 5h8v6H4z', '#3d78b7', '#8dbbe4', 1.500) + c(3, 3, 2, '#f1cf2b') + c(3, 12, 2, '#d33')], 'dd', ['Linienlast', p('M3 2h8v10H3z', '#456', '#eee') + p('M4 10l3-6 3 6', '#d33') + p('M1 4h4M9 4h4', '#345')], 'dd', ['Flächenlast', p('M1 4l4 2 4-3 4 2v6l-4-1-4 2-4-2z', '#425d86', '#8fb1d4') + p('M5 6v6M9 3v7', '#445')], 'dd', ['Körper', cube(3, 2, '#8fb7de')], ['Öffnung', p('M1 5h12v7H1z', '#567', '#b2cdb8') + c(4, 4, 2, '#eac537') + p('M7 3h5v5H7z', '#457', '#dde')], 'dd', 'sep',
  ['Situation', p('M2 3h4l3 4-3 4H2M6 7h7M8 5l4 2-4 2', '#345', 'none', 1.400)], 'dd', ['Last 1', p('M7 3h5v5M7 7v5', '#b47526', 'none', 2) + c(4, 4, 2, '#e6c43b') + c(10, 12, 1.500, '#d22')], ['Last 2', `<g opacity=".6">${frame}</g>` + c(2, 12, 1.500, '#c99')], ['Last 3', frame + p('M2 4h10', '#269', 'none', 2) + c(12, 12, 1.500, '#d22') + c(2, 12, 1.500, '#d22')], ['Last 4', cube(3, 2, '#74a1c2') + p('M3 5h10M3 10h9', '#245', 'none', 2)], ['Last 5', c(5, 5, 2, '#eac537', '#776') + p('M5 7q2 6 7 3l-2-5z', '#357', '#81a7cc')], 'dd', 'gripw',
  ['Auswahl', p('M2 3l10 2v8L4 10z', '#433', '#947768') + p('M1 5h12M4 2v11', '#433')], ['Zoom', lens + p('M4 5h5v4', '#35b', 'none', 1.500)], ['Zoom zurück', lens + p('M5 4l7 7m0-7L5 11', '#d22', 'none', 1.300)], ['Drahtmodell', p('M1 5l4-3h8v7l-4 4H1zM1 5h8v8M9 5l4-3M5 2v7h8M1 13l4-4', '#7180a8')], ['Flächenmodell', p('M1 6h6v6H1zM4 4h6v6M7 2h6v6M1 6l6-4M7 12l6-4', '#7180a8', '#cbd7ea')], 'sep',
  ['X', axis(X, '#345')], ['Y', axis(Y, '#345')], ['Z', axis(Z, '#345')], ['-X', axis(X, '#345') + p('M2 9h3', '#222')], 'dd', ['Schnitt', p('M1 12h12M2 3h4v5H2zM4 10l8-8M8 7l5 5', '#234', 'none', 1.800)], 'dd', 'sep', ['Drehung', p('M2 4l4-2 6 2v5l-5 4-5-3z', '#556', '#a9bbcb') + c(7, 7, 2, '#eef', '#457')], 'dd', 'gripw',
  ['Verformung', p('M2 12V4l9-2v10', '#444', 'none', 1.500) + p('M2 12l3-8h5l3-1', '#d33', 'none', 1.500)], ['Stablast', p('M1 4h6v4H1zM6 5h7v4H6z', '#654', '#c3b6a0', 1.500)], 'sep',
  ['Verlauf', p('M2 12L13 10M5 2v8M2 2h7M9 7l4 4', '#5d79b4') + p('M2 12L13 10', '#c88')], ['Isoflächen', p('M0 7Q2 2 7 2T14 7Q12 11 7 12Q2 11 0 7z', 'none', '#1a46c8') + p('M2 7Q3 3 7 3T13 6Q10 10 7 10Q4 10 2 7z', 'none', '#24b84b') + p('M1 6Q3 2 7 3T11 6L8 9Q4 9 1 6z', 'none', '#ffe11b') + p('M1 6Q3 2 8 3L8 6z', 'none', '#e33'), 'on'], ['Volumenwerte', cube(3, 2, '#73c6a8') + c(6, 7, 2, '#e0b23b')], ['Reaktionen', p('M7 12V4M2 5h11M10 3v5', '#258d35', 'none', 2) + c(7, 11, 1.500, '#333')], ['Glättung', p('M1 12l12-3M2 9l4-5h6l-4 5z', '#7c91b8', '#d8e2ef') + p('M1 12l12-2', '#d77')], ['Mehrfach', p('M1 2h5v4H1zM8 2h5v4H8zM1 8h5v4H1zM8 8h5v4H8z', '#665228', '#efd34d')], 'dd', ['Schnitt I', p('M2 12h11M7 2v7M3 2h8M4 9h7', '#567db8') + p('M2 12l4-2', '#d66')], ['Gitter', p('M1 1h12v12H1zM5 1v12M9 1v12M1 5h12M1 9h12', '#263c6e', '#a5b9dd', 1.300)]
];
const special = {
  grip: '<i class="grip"></i>', gripw: '<i class="grip wide"></i>', sep: '<i class="sep"></i>',
  dd: '<button class="dd" aria-label="Auswahl öffnen"></button>',
  select: '<select aria-label="Lastfall wählen"><option>LF1</option></select>'
};
const build = (id, items) => {
  document.getElementById(id).innerHTML = items.map(i => typeof i === 'string' ? special[i]
    : `<button class="${i[2] || ''}" aria-label="${i[0]}"><svg viewBox="0 0 14 14">${i[1]}</svg></button>`).join('');
};
build('bar-main', main);
build('bar-model', model);
```
